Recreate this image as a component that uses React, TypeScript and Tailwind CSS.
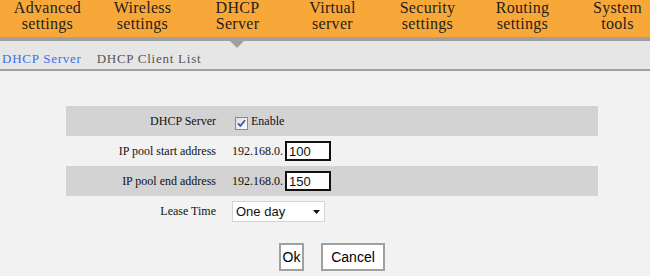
import React from 'react';

const menu = [
  ['Advanced', 'settings'],
  ['Wireless', 'settings'],
  ['DHCP', 'Server'],
  ['Virtual', 'server'],
  ['Security', 'settings'],
  ['Routing', 'settings'],
  ['System', 'tools'],
];

function Checkbox() {
  return (
    <svg width="13" height="13" viewBox="0 0 13 13" className="mt-[5px] ml-[3px] shrink-0">
      <defs>
        <linearGradient id="cb" x1="0" y1="0" x2="1" y2="1">
          <stop offset="0" stopColor="#dcdcdc" />
          <stop offset="1" stopColor="#ffffff" />
        </linearGradient>
      </defs>
      <rect x="0.5" y="0.5" width="12" height="12" fill="url(#cb)" stroke="#8a8a8a" />
      <path d="M3 6.3 L5.4 8.9 L10 3.2" fill="none" stroke="#3d58a6" strokeWidth="1.8" />
    </svg>
  );
}

function Row({ label, shaded, children }: { label: string; shaded?: boolean; children: React.ReactNode }) {
  return (
    <div className={`flex h-[30px] items-center ${shaded ? 'bg-[#d3d3d3]' : ''}`}>
      <div className="w-[150px] shrink-0 text-right">{label}</div>
      <div className="flex items-center pl-[16px]">{children}</div>
    </div>
  );
}

export default function App() {
  return (
    <div className="w-[650px] h-[276px] overflow-hidden bg-[#f2f2f2] font-['Liberation_Serif','Times_New_Roman',serif] text-[#111]">
      {/* Top menu */}
      <nav className="flex h-[37px] w-[665px] bg-[#f8a838]">
        {menu.map(([a, b]) => (
          <div key={a} className="w-[95px] shrink-0 text-center text-[16px] leading-[16px] tracking-[0.3px] text-[#1e1e1e]">
            {a}
            <br />
            {b}
          </div>
        ))}
      </nav>
      <div className="h-[4px] bg-[#a0a0a0]" />

      {/* Sub menu */}
      <div className="relative flex h-[28px] items-start bg-[#e6e6e6] pl-[2px] pt-[10px] text-[13px] leading-[16px] tracking-[0.75px]">
        <span className="absolute left-[230px] top-0 h-0 w-0 border-l-[7px] border-r-[7px] border-t-[7px] border-l-transparent border-r-transparent border-t-[#a0a0a0]" />
        <span className="text-[#3a6df0]">DHCP Server</span>
        <span className="ml-[15px] text-[#555]">DHCP Client List</span>
      </div>
      <div className="h-[2px] bg-[#a0a0a0]" />

      {/* Form */}
      <div className="ml-[66px] mt-[35px] w-[532px] text-[12px]">
        <Row label="DHCP Server" shaded>
          <Checkbox />
          <span className="ml-[3px]">Enable</span>
        </Row>
        <Row label="IP pool start address">
          <span>192.168.0.</span>
          <input
            defaultValue="100"
            className="ml-[2px] h-[20px] w-[46px] border-2 border-[#111] bg-white px-[2px] font-['Liberation_Sans',Arial,sans-serif] text-[13px] outline-none"
          />
        </Row>
        <Row label="IP pool end address" shaded>
          <span>192.168.0.</span>
          <input
            defaultValue="150"
            className="ml-[2px] h-[20px] w-[46px] border-2 border-[#111] bg-white px-[2px] font-['Liberation_Sans',Arial,sans-serif] text-[13px] outline-none"
          />
        </Row>
        <Row label="Lease Time">
          <div className="relative">
            <select
              defaultValue="day"
              className="h-[21px] w-[93px] appearance-none border border-[#d4d4d4] bg-white pl-[3px] font-['Liberation_Sans',Arial,sans-serif] text-[13px] text-[#111] outline-none"
            >
              <option value="hour">One hour</option>
              <option value="day">One day</option>
              <option value="week">One week</option>
            </select>
            <svg width="7" height="4" viewBox="0 0 7 4" className="pointer-events-none absolute left-[81px] top-[9px]">
              <path d="M0 0 H7 L3.5 4 Z" fill="#111" />
            </svg>
          </div>
        </Row>

        <div className="mt-[17px] flex justify-center gap-[17px] font-['Liberation_Sans',Arial,sans-serif] text-[14px]">
          <button className="h-[28px] w-[25px] border-2 border-[#a0a0a0] bg-white text-black">Ok</button>
          <button className="h-[28px] w-[64px] border-2 border-[#a0a0a0] bg-white text-black">Cancel</button>
        </div>
      </div>
    </div>
  );
}
